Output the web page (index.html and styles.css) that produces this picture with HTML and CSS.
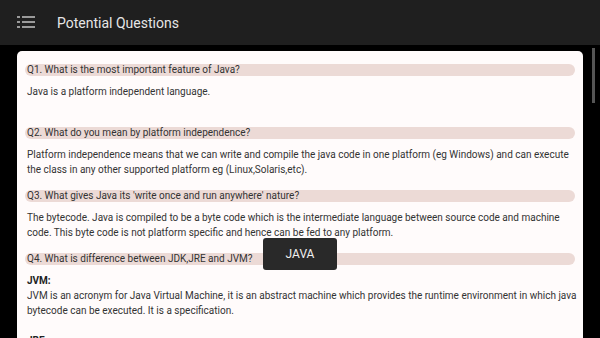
FILE: index.html
```html
<!DOCTYPE html>
<html lang="en">

<head>
    <meta charset="UTF-8">
    <meta name="viewport" content="width=device-width, initial-scale=1.0">
    <title>Potential Questions</title>
    <link rel="stylesheet" href="styles.css">
</head>

<body>
    <div class="topbar">
        <svg class="menu" width="18" height="12" viewBox="0 0 18 12">
            <rect x="0" y="0" width="3" height="2" fill="#9a9a9a" />
            <rect x="5" y="0" width="13" height="2" fill="#9a9a9a" />
            <rect x="0" y="5" width="3" height="2" fill="#9a9a9a" />
            <rect x="5" y="5" width="13" height="2" fill="#9a9a9a" />
            <rect x="0" y="10" width="3" height="2" fill="#9a9a9a" />
            <rect x="5" y="10" width="13" height="2" fill="#9a9a9a" />
        </svg>
        <h1 class="title">Potential Questions</h1>
    </div>

    <div class="content">
        <div class="card">
            <div class="q">Q1. What is the most important feature of Java?</div>
            <p class="a">Java is a platform independent language.<br><br></p>

            <div class="q">Q2. What do you mean by platform independence?</div>
            <p class="a">Platform independence means that we can write and compile the java code in one platform (eg Windows) and can execute the class in any other supported platform eg (Linux,Solaris,etc).</p>

            <div class="q">Q3. What gives Java its 'write once and run anywhere' nature?</div>
            <p class="a">The bytecode. Java is compiled to be a byte code which is the intermediate language between source code and machine code. This byte code is not platform specific and hence can be fed to any platform.</p>

            <div class="q">Q4. What is difference between JDK,JRE and JVM?</div>
            <p class="a"><b>JVM:</b><br>JVM is an acronym for Java Virtual Machine, it is an abstract machine which provides the runtime environment in which java bytecode can be executed. It is a specification.<br><br><b>JRE:</b><br>JRE stands for Java Runtime Environment.</p>
        </div>
        <div class="scrollbar"></div>
    </div>

    <div class="toast">JAVA</div>
</body>

</html>
```

FILE: styles.css
```css
html, body {
    margin: 0;
    height: 100%;
    overflow: hidden;
}
body {
    background-color: #000;
    font-family: Roboto, "Liberation Sans", sans-serif;
    position: relative;
}

.topbar {
    height: 45px;
    background-color: #1f1f1f;
    display: flex;
    align-items: center;
    padding-left: 17px;
    box-sizing: border-box;
}
.menu { margin-top: -2px; }
.title {
    margin: 0 0 0 22px;
    font-size: 14px;
    font-weight: 400;
    color: #e6e6e6;
}

.content {
    display: flex;
    padding: 6px 4px 0 17px;
}
.card {
    width: 550px;
    background-color: #fffbfb;
    border-radius: 5px;
    padding: 13px 8px 0 8px;
    height: 400px;
}
.scrollbar {
    width: 3px;
    height: 55px;
    margin-left: 9px;
    margin-top: -3px;
    background-color: #555;
}

.q {
    background-color: #ecdad6;
    border-radius: 6px;
    height: 12px;
    line-height: 12px;
    padding-left: 2px;
    font-size: 10px;
    color: #333;
}
.a {
    margin: 8px -6px 13px 0;
    padding-left: 2px;
    font-size: 10px;
    line-height: 15px;
    color: #333;
}
.a b { color: #222; }

.toast {
    position: absolute;
    left: 263px;
    top: 238px;
    width: 74px;
    height: 32px;
    line-height: 32px;
    text-align: center;
    background-color: #292929;
    border-radius: 3px;
    color: #f0f0f0;
    font-size: 12px;
}
```
